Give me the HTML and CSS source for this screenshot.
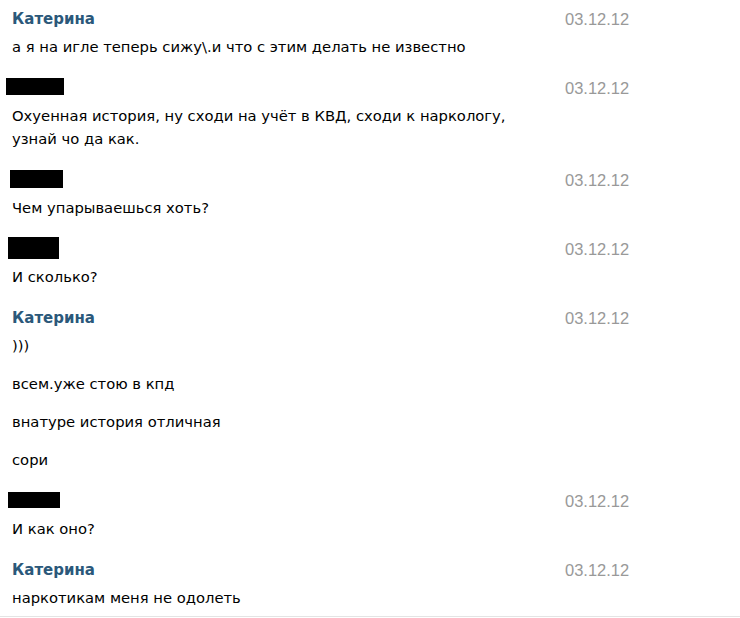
FILE: index.html
```html
<!DOCTYPE html>
<html lang="ru">
<head>
<meta charset="utf-8">
<title>Сообщения</title>
<link rel="stylesheet" href="styles.css">
</head>
<body>
<div class="list">
  <div class="msg">
    <div class="head"><span class="name">Катерина</span><span class="date">03.12.12</span></div>
    <div class="body"><p>а я на игле теперь сижу\.и что с этим делать не известно</p></div>
  </div>
  <div class="msg">
    <div class="head"><span class="redact r1"></span><span class="date">03.12.12</span></div>
    <div class="body"><p>Охуенная история, ну сходи на учёт в КВД, сходи к наркологу,<br>узнай чо да как.</p></div>
  </div>
  <div class="msg">
    <div class="head"><span class="redact r2"></span><span class="date">03.12.12</span></div>
    <div class="body"><p>Чем упарываешься хоть?</p></div>
  </div>
  <div class="msg">
    <div class="head"><span class="redact r3"></span><span class="date">03.12.12</span></div>
    <div class="body"><p>И сколько?</p></div>
  </div>
  <div class="msg">
    <div class="head"><span class="name">Катерина</span><span class="date">03.12.12</span></div>
    <div class="body">
      <p>)))</p>
      <p>всем.уже стою в кпд</p>
      <p>внатуре история отличная</p>
      <p>сори</p>
    </div>
  </div>
  <div class="msg">
    <div class="head"><span class="redact r4"></span><span class="date">03.12.12</span></div>
    <div class="body"><p>И как оно?</p></div>
  </div>
  <div class="msg last">
    <div class="head"><span class="name">Катерина</span><span class="date">03.12.12</span></div>
    <div class="body"><p>наркотикам меня не одолеть</p></div>
  </div>
</div>
</body>
</html>
```

FILE: styles.css
```css
html, body {
  margin: 0;
  padding: 0;
  background: #fff;
}
body {
  font-family: "DejaVu Sans", "Liberation Sans", sans-serif;
  font-size: 14.75px;
  color: #000;
}
.list {
  padding-top: 10px;
  border-bottom: 1px solid #e4e4e4;
}
.msg {
  padding-left: 12px;
}
.msg + .msg {
  margin-top: 21px;
}
.msg.last {
  padding-bottom: 7px;
}
.head {
  display: grid;
  grid-template-columns: 553px auto;
  height: 18px;
  line-height: 18px;
  margin-bottom: 7px;
}
.name {
  font-family: "DejaVu Sans", sans-serif;
  font-weight: bold;
  font-size: 15px;
  color: #2b587a;
}
.date {
  font-family: "Liberation Sans", Arial, sans-serif;
  font-size: 16.5px;
  color: #999;
}
.redact {
  display: block;
  background: #000;
}
.r1 { width: 58px; height: 17px; margin: -1px 0 0 -6px; }
.r2 { width: 53px; height: 18px; margin: -1px 0 0 -2px; }
.r3 { width: 51px; height: 22px; margin: -3px 0 0 -4px; }
.r4 { width: 52px; height: 16px; margin: 0 0 0 -4px; }
.body p {
  margin: 0;
  line-height: 23px;
}
.body p + p {
  margin-top: 15px;
}
```
